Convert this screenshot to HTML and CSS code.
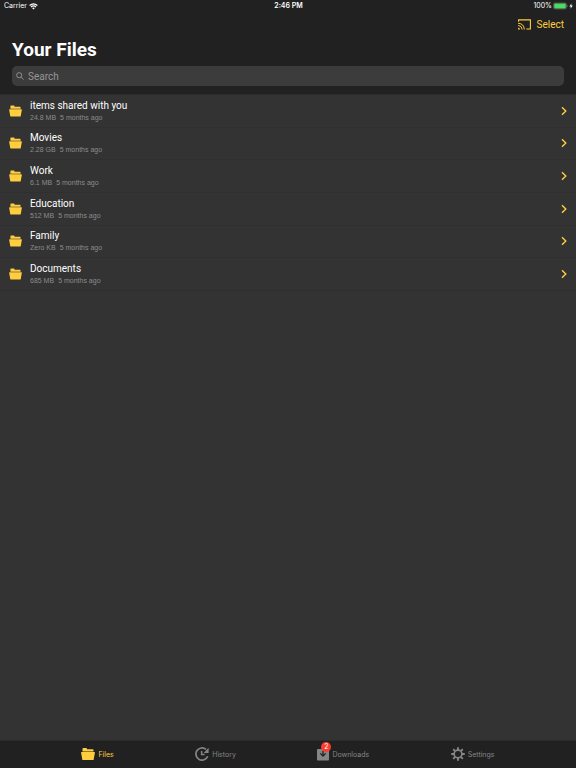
FILE: index.html
```html
<!DOCTYPE html>
<html lang="en">
<head>
<meta charset="utf-8">
<meta name="viewport" content="width=device-width, initial-scale=1">
<title>Your Files</title>
<link rel="stylesheet" href="styles.css">
</head>
<body>
<svg class="defs" aria-hidden="true">
  <symbol id="folder" viewBox="0 0 14 13">
    <path d="M1.5 4V1.2Q1.5.5 2.2.5H5.3Q5.9.5 6 1.8H11.8Q12.5 1.8 12.5 2.5V4Z"/>
    <path d="M.6 4.6H13.4Q14 4.6 13.9 5.2L12.7 11.9Q12.6 12.5 12 12.5H2Q1.4 12.5 1.3 11.9L.1 5.2Q0 4.6.6 4.6Z"/>
  </symbol>
  <symbol id="chevron" viewBox="0 0 6 10">
    <path d="M1 1.2L4.8 5L1 8.8" fill="none" stroke="currentColor" stroke-width="1.4"/>
  </symbol>
</svg>
<header class="header">
  <div class="status">
    <span class="carrier">Carrier
      <svg class="wifi" viewBox="0 0 9 7" aria-hidden="true"><path d="M.6 2.5Q4.5-.9 8.4 2.5M2 4Q4.5 1.9 7 4" fill="none" stroke="currentColor" stroke-width="1.2"/><path d="M3.1 5.1Q4.5 4.1 5.9 5.1L4.5 6.6Z" fill="currentColor"/></svg>
    </span>
    <time class="clock">2:46 PM</time>
    <span class="power">100%
      <svg class="battery" viewBox="0 0 20 8" aria-hidden="true"><rect x=".5" y="1" width="13" height="6" rx="1.4" fill="none" stroke="#777" stroke-width=".6"/><rect x="1.2" y="1.6" width="11.6" height="4.8" rx=".8" fill="#4cd964"/><path d="M14.3 3V5Q15.1 4.7 15.1 4T14.3 3Z" fill="#777"/><path d="M18.5 1.2L16.4 4.4H17.9L17.5 6.8L19.8 3.6H18.2Z" fill="#fff"/></svg>
    </span>
  </div>
  <div class="actions">
    <button class="action" type="button" aria-label="Cast">
      <svg class="cast" viewBox="0 0 13 11" fill="none" stroke="currentColor" aria-hidden="true"><path d="M.6 2.8V.9H12.4V10H8.3" stroke-width="1.1"/><path d="M.1 4.3Q6 4.5 6.3 10.5M.1 6.4Q3.9 6.7 4.2 10.5"/><path d="M.1 8.4Q2 8.6 2.2 10.5H.1Z" fill="currentColor" stroke="none"/></svg>
    </button>
    <button class="action" type="button">Select</button>
  </div>
  <h1 class="title">Your Files</h1>
  <label class="search">
    <svg class="glass" viewBox="0 0 9 9" fill="none" stroke="currentColor" aria-hidden="true"><circle cx="3.6" cy="3.6" r="2.9"/><path d="M5.7 5.7L8.6 8.6"/></svg>
    <input class="search-input" type="search" placeholder="Search" aria-label="Search">
  </label>
</header>
<main class="content">
  <ul class="files">
    <li class="row"><a class="file" href="#"><svg class="folder"><use href="#folder"/></svg><span class="text"><span class="name">items shared with you</span><span class="meta"><span>24.8 MB</span><span>5 months ago</span></span></span><svg class="chevron"><use href="#chevron"/></svg></a></li>
    <li class="row"><a class="file" href="#"><svg class="folder"><use href="#folder"/></svg><span class="text"><span class="name">Movies</span><span class="meta"><span>2.28 GB</span><span>5 months ago</span></span></span><svg class="chevron"><use href="#chevron"/></svg></a></li>
    <li class="row"><a class="file" href="#"><svg class="folder"><use href="#folder"/></svg><span class="text"><span class="name">Work</span><span class="meta"><span>6.1 MB</span><span>5 months ago</span></span></span><svg class="chevron"><use href="#chevron"/></svg></a></li>
    <li class="row"><a class="file" href="#"><svg class="folder"><use href="#folder"/></svg><span class="text"><span class="name">Education</span><span class="meta"><span>512 MB</span><span>5 months ago</span></span></span><svg class="chevron"><use href="#chevron"/></svg></a></li>
    <li class="row"><a class="file" href="#"><svg class="folder"><use href="#folder"/></svg><span class="text"><span class="name">Family</span><span class="meta"><span>Zero KB</span><span>5 months ago</span></span></span><svg class="chevron"><use href="#chevron"/></svg></a></li>
    <li class="row"><a class="file" href="#"><svg class="folder"><use href="#folder"/></svg><span class="text"><span class="name">Documents</span><span class="meta"><span>685 MB</span><span>5 months ago</span></span></span><svg class="chevron"><use href="#chevron"/></svg></a></li>
  </ul>
</main>
<nav class="tabs">
  <a class="tab tab-active" href="#" aria-current="page"><svg class="tab-icon"><use href="#folder"/></svg>Files</a>
  <a class="tab" href="#"><svg class="tab-icon" viewBox="0 0 14 14" aria-hidden="true"><path d="M12.7 9.3A6.1 6.1 0 1 1 11 2.4" fill="none" stroke="currentColor" stroke-width="1.7"/><path d="M13.6 .8V6H8.6Z" fill="currentColor"/><path d="M6.6 4V7.6H9.6" fill="none" stroke="currentColor" stroke-width="1.5"/></svg>History</a>
  <a class="tab" href="#"><span class="tab-mark"><svg class="tab-icon tab-icon-narrow" viewBox="0 0 12 14" aria-hidden="true"><path d="M1 2H11Q12 2 12 3V12.4Q12 13.4 11 13.4H1Q0 13.4 0 12.4V3Q0 2 1 2Z" fill="currentColor"/><path d="M6 4V9M3.3 6.4L6 9.1L8.7 6.4" fill="none" stroke="#212121" stroke-width="1.3"/></svg><span class="badge">2</span></span>Downloads</a>
  <a class="tab" href="#"><svg class="tab-icon" viewBox="0 0 14 14" stroke="currentColor" aria-hidden="true"><circle cx="7" cy="7" r="3.9" fill="none" stroke-width="1.7"/><path d="M7 .2V3M7 11V13.8M.2 7H3M11 7H13.8M2.2 2.2L4 4M10 10L11.8 11.8M2.2 11.8L4 10M10 4L11.8 2.2" stroke-width="1.9"/></svg>Settings</a>
</nav>
</body>
</html>
```
FILE: styles.css
```css
* {
  box-sizing: border-box;
}

body {
  margin: 0;
  min-height: 100vh;
  display: flex;
  flex-direction: column;
  background: #333;
  color: #fff;
  font-family: Roboto, "Liberation Sans", sans-serif;
}

a {
  color: inherit;
  text-decoration: none;
}

svg {
  display: block;
  flex: none;
}

.defs {
  position: absolute;
  width: 0;
  height: 0;
}

.header {
  padding-bottom: 8px;
  background: #212121;
  border-bottom: 1px solid #2b2b2b;
}

.status,
.tab {
  font-family: Inter, "Liberation Sans", sans-serif;
  font-size: 7px;
}

.status {
  display: grid;
  grid-template-columns: 1fr auto 1fr;
  align-items: center;
  height: 12px;
  padding: 0 3px 0 4px;
  line-height: 12px;
}

.carrier,
.power {
  display: flex;
  align-items: center;
}

.carrier {
  gap: 2px;
}

.power {
  justify-content: flex-end;
  gap: 1px;
}

.wifi {
  width: 9px;
  height: 7px;
}

.battery {
  width: 20px;
  height: 8px;
}

.clock {
  font-weight: 600;
}

.actions {
  display: flex;
  justify-content: flex-end;
  align-items: center;
  gap: 6px;
  height: 24px;
  padding-right: 12px;
}

.action {
  margin: 0;
  padding: 0;
  border: 0;
  background: none;
  color: #ffcd3e;
  font: inherit;
  font-size: 10px;
}

.cast {
  width: 13px;
  height: 11px;
}

.title {
  margin: 0 12px 2px;
  font-size: 19px;
  line-height: 28px;
  font-weight: 700;
}

.search {
  display: flex;
  align-items: center;
  gap: 4px;
  height: 20px;
  margin: 0 12px;
  padding: 0 4px;
  border-radius: 5px;
  background: #3c3c3c;
  color: #969696;
}

.glass {
  width: 8px;
  height: 8px;
}

.search-input {
  flex: 1;
  min-width: 0;
  padding: 0;
  border: 0;
  outline: 0;
  background: none;
  color: #fff;
  font: inherit;
  font-size: 10px;
}

.search-input::placeholder {
  color: #969696;
  opacity: 1;
}

.content {
  flex: 1;
}

.files {
  display: grid;
  grid-auto-rows: 1fr;
  min-height: 196px;
  margin: 0;
  padding: 0;
  list-style: none;
}

.row {
  display: grid;
  border-bottom: 1px solid #2f2f2f;
}

.file {
  display: flex;
  align-items: center;
  gap: 8px;
  padding: 0 9px;
}

.folder {
  width: 13px;
  height: 12px;
  fill: #ffcd3e;
}

.text {
  flex: 1;
  display: flex;
  flex-direction: column;
  padding-top: 2px;
}

.name {
  font-size: 10px;
  line-height: 12px;
}

.meta {
  display: flex;
  gap: 4px;
  color: #8c8c8c;
  font-family: "Liberation Sans", Arial, sans-serif;
  font-size: 7px;
  line-height: 12px;
}

.chevron {
  width: 6px;
  height: 10px;
  color: #ffcd3e;
}

.tabs {
  display: flex;
  justify-content: space-evenly;
  height: 28px;
  background: #212121;
  border-top: 1px solid #2b2b2b;
}

.tab {
  display: flex;
  align-items: center;
  gap: 3px;
  height: 26px;
  color: #858585;
}

.tab-active {
  color: #ffcd3e;
}

.tab-icon {
  width: 14px;
  height: 14px;
  fill: currentColor;
}

.tab-icon-narrow {
  width: 12px;
}

.tab-mark {
  position: relative;
}

.badge {
  position: absolute;
  top: -5px;
  right: -2px;
  width: 10px;
  height: 10px;
  border-radius: 50%;
  background: #ff3b30;
  color: #fff;
  line-height: 10px;
  text-align: center;
}
```
